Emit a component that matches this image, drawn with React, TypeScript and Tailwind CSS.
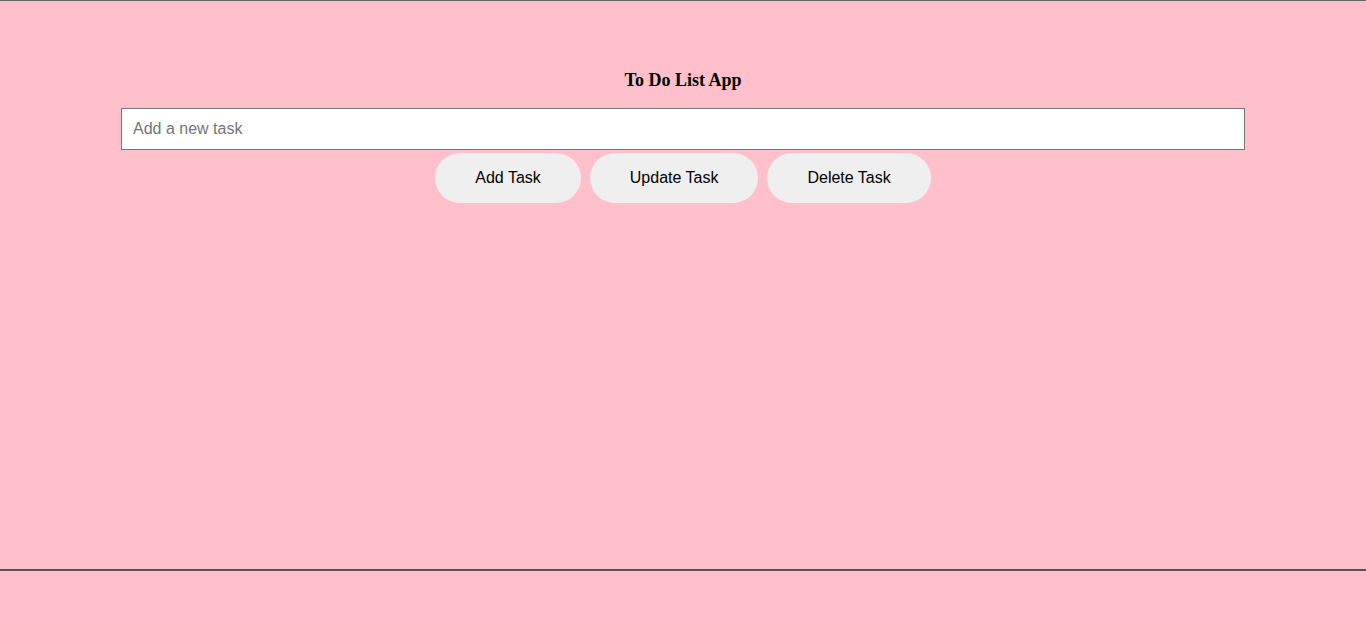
import React, { useState } from 'react'

export default function App() {
  const [task, setTask] = useState('')

  return (
    <div className="min-h-[625px] bg-[#ffc0cb] border-t border-[#666666]" style={{ fontFamily: '"Liberation Sans", Arial, sans-serif' }}>
      {/* Main app area */}
      <div className="h-[570px] border-b-2 border-[#555555] flex flex-col items-center pt-[67px]">
        <h1
          className="text-[18px] leading-[24px] font-bold text-black"
          style={{ fontFamily: '"Liberation Serif", "DejaVu Serif", serif' }}
        >
          To Do List App
        </h1>
        <input
          type="text"
          value={task}
          onChange={(e) => setTask(e.target.value)}
          placeholder="Add a new task"
          className="mt-[16px] w-[1124px] h-[42px] bg-white border border-[#767676] px-[11px] text-[16px] text-black placeholder:text-[#757575] outline-none"
        />
        <div className="mt-[3px] flex gap-[9px]">
          <button className="h-[50px] px-10 rounded-full bg-[#efefef] text-[16px] text-black">
            Add Task
          </button>
          <button className="h-[50px] px-10 rounded-full bg-[#efefef] text-[16px] text-black">
            Update Task
          </button>
          <button className="h-[50px] px-10 rounded-full bg-[#efefef] text-[16px] text-black">
            Delete Task
          </button>
        </div>
      </div>
    </div>
  )
}
